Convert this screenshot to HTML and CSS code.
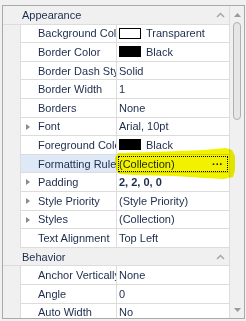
FILE: index.html
```html
<!DOCTYPE html>
<html lang="en">
<head>
    <meta charset="UTF-8">
    <title>Property Grid</title>
    <link rel="stylesheet" href="styles.css">
</head>
<body>
    <div class="panel">
        <div class="grid">
            <div class="category">
                <span>Appearance</span>
                <svg class="collapse" width="9" height="6" viewBox="0 0 9 6"><path d="M1 5 L4.5 1.5 L8 5" fill="none" stroke="#a8a8a8" stroke-width="1.5"/></svg>
            </div>
            <div class="row"><div class="indent"></div><div class="name">Background Color</div><div class="value"><span class="swatch white"></span>Transparent</div></div>
            <div class="row"><div class="indent"></div><div class="name">Border Color</div><div class="value"><span class="swatch black"></span>Black</div></div>
            <div class="row"><div class="indent"></div><div class="name">Border Dash Style</div><div class="value">Solid</div></div>
            <div class="row"><div class="indent"></div><div class="name">Border Width</div><div class="value">1</div></div>
            <div class="row"><div class="indent"></div><div class="name">Borders</div><div class="value">None</div></div>
            <div class="row"><div class="indent"></div><div class="name expand">Font</div><div class="value">Arial, 10pt</div></div>
            <div class="row"><div class="indent"></div><div class="name">Foreground Color</div><div class="value"><span class="swatch black"></span>Black</div></div>
            <div class="row selected"><div class="indent"></div><div class="name">Formatting Rules</div><div class="value focus"><span>(Collection)</span><span class="dots">&middot;&middot;&middot;</span></div></div>
            <div class="row"><div class="indent"></div><div class="name expand">Padding</div><div class="value bold">2, 2, 0, 0</div></div>
            <div class="row"><div class="indent"></div><div class="name expand">Style Priority</div><div class="value">(Style Priority)</div></div>
            <div class="row"><div class="indent"></div><div class="name expand">Styles</div><div class="value">(Collection)</div></div>
            <div class="row"><div class="indent"></div><div class="name">Text Alignment</div><div class="value">Top Left</div></div>
            <div class="category">
                <span>Behavior</span>
                <svg class="collapse" width="9" height="6" viewBox="0 0 9 6"><path d="M1 5 L4.5 1.5 L8 5" fill="none" stroke="#a8a8a8" stroke-width="1.5"/></svg>
            </div>
            <div class="row"><div class="indent"></div><div class="name">Anchor Vertically</div><div class="value">None</div></div>
            <div class="row"><div class="indent"></div><div class="name">Angle</div><div class="value">0</div></div>
            <div class="row"><div class="indent"></div><div class="name">Auto Width</div><div class="value">No</div></div>
        </div>
        <div class="scrollbar">
            <svg width="7" height="4" viewBox="0 0 7 4"><path d="M0 4 L3.5 0 L7 4 Z" fill="#9a9a9a"/></svg>
            <div class="track"><div class="thumb"></div></div>
            <svg width="7" height="4" viewBox="0 0 7 4"><path d="M0 0 L3.5 4 L7 0 Z" fill="#9a9a9a"/></svg>
        </div>
        <div class="marker"></div>
    </div>
</body>
</html>
```

FILE: styles.css
```css
body {
    margin: 0;
    background: #f0f0f0;
    font-family: "Liberation Sans", Arial, sans-serif;
    font-size: 11px;
    color: #1c2c4c;
}

.panel {
    position: relative;
    display: flex;
    margin: 5px 1px 0 2px;
    height: 312px;
    border: 1px solid #a9a9a9;
    background: #f3f3f3;
    overflow: hidden;
}

.grid {
    flex: 1;
    min-width: 0;
}

.category {
    display: flex;
    align-items: center;
    justify-content: space-between;
    height: 18.6px;
    box-sizing: border-box;
    padding: 0 4px 0 19px;
    background: #f0f0f0;
    border-bottom: 1px solid #dcdcdc;
}

.row {
    display: flex;
    height: 18.6px;
}

.indent {
    width: 17px;
    flex: none;
    background: #f0f0f0;
    border-right: 1px solid #dcdcdc;
}

.name,
.value {
    display: flex;
    align-items: center;
    box-sizing: border-box;
    background: #fff;
    border-bottom: 1px solid #dcdcdc;
    white-space: nowrap;
    overflow: hidden;
}

.name {
    width: 96px;
    flex: none;
    padding-left: 17px;
    border-right: 1px solid #dcdcdc;
    position: relative;
}

.name.expand::before {
    content: "";
    position: absolute;
    left: 5px;
    top: 6px;
    border-left: 4px solid #8a8a8a;
    border-top: 3.5px solid transparent;
    border-bottom: 3.5px solid transparent;
}

.value {
    flex: 1;
    padding-left: 2px;
}

.bold {
    font-weight: bold;
}

.swatch {
    width: 20px;
    height: 9px;
    margin-right: 5px;
    border: 1px solid #000;
    flex: none;
}

.swatch.white {
    background: #fff;
}

.swatch.black {
    background: #000;
}

.selected .name {
    background: #dfe8f6;
}

.value.focus {
    justify-content: space-between;
    outline: 1px dotted #000;
    outline-offset: -2px;
    padding-right: 6px;
}

.dots {
    font-weight: bold;
}

.scrollbar {
    width: 15px;
    flex: none;
    display: flex;
    flex-direction: column;
    align-items: center;
    padding: 7px 0 6px;
    box-sizing: border-box;
    background: #f0f0f0;
    border-left: 1px solid #dcdcdc;
}

.track {
    flex: 1;
    width: 100%;
    padding: 5px 3px;
    box-sizing: border-box;
}

.thumb {
    height: 96px;
    border: 1px solid #b0b0b0;
    border-radius: 4px;
    background: #e6e6e6;
}

/* hand-drawn highlighter stroke over the Formatting Rules value */
.marker {
    position: absolute;
    left: 111px;
    top: 138px;
    width: 122px;
    height: 36px;
    background: #f2f200;
    mix-blend-mode: multiply;
    clip-path: polygon(4px 9px, 40px 8px, 90px 6px, 112px 4px, 118px 6px, 121px 12px, 121px 26px, 119px 33px, 110px 35px, 90px 34px, 60px 32px, 20px 31px, 5px 30px, 2px 26px, 1px 14px);
}
```
